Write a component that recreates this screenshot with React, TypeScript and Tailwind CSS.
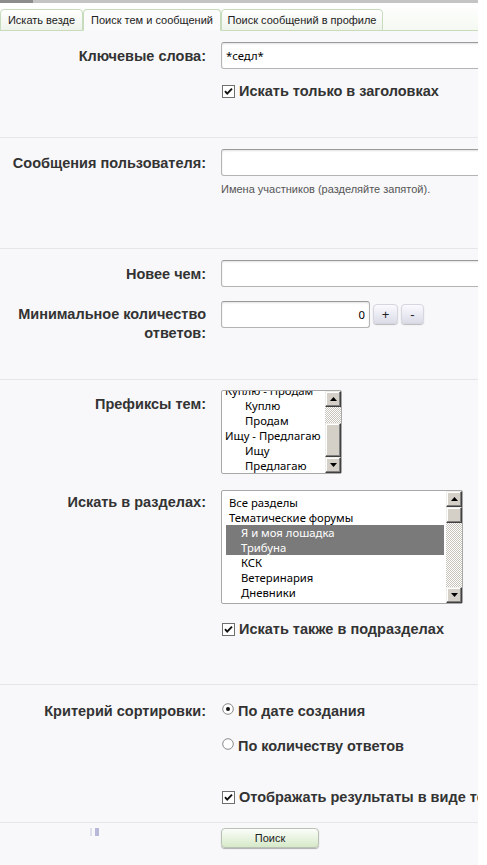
import React from 'react';

const labelCls = "text-[14.5px] font-bold leading-[16px] text-[#333] font-['Liberation_Sans',Arial,sans-serif]";
const listFont = "font-['Noto_Sans','DejaVu_Sans',sans-serif] text-[11.3px] leading-[15px] text-black";

// Windows-classic 3D bevel used by scroll buttons and thumbs
const bevel =
  'border border-t-[#f0eee8] border-l-[#f0eee8] border-r-[#404040] border-b-[#404040] bg-[#d4d0c8] shadow-[inset_-1px_-1px_0_#808080,inset_1px_1px_0_#ffffff]';

const ArrowButton = ({ down }: { down?: boolean }) => (
  <div className={`flex h-[16px] w-[16px] shrink-0 items-center justify-center ${bevel}`}>
    <svg width="7" height="4" viewBox="0 0 7 4">
      <path d={down ? 'M0 0h7L3.5 4z' : 'M0 4h7L3.5 0z'} fill="#000" />
    </svg>
  </div>
);

const Scrollbar = ({ before, thumb, after }: { before: number; thumb: number; after: number }) => (
  <div className="flex w-[16px] shrink-0 flex-col">
    <ArrowButton />
    <div
      className="bg-[repeating-conic-gradient(#c8c4bc_0_25%,#ffffff_0_50%)] bg-[length:2px_2px]"
      style={{ height: before }}
    />
    <div className={bevel} style={{ height: thumb }} />
    <div
      className="bg-[repeating-conic-gradient(#c8c4bc_0_25%,#ffffff_0_50%)] bg-[length:2px_2px]"
      style={{ height: after }}
    />
    <ArrowButton down />
  </div>
);

const CheckBox = () => (
  <svg width="13" height="13" viewBox="0 0 13 13" className="shrink-0">
    <rect x="0.5" y="0.5" width="12" height="12" fill="#fff" stroke="#6f6f6f" />
    <path d="M3 6.2 L5.2 8.6 L10 3.6" fill="none" stroke="#111" strokeWidth="1.9" />
  </svg>
);

const Radio = ({ checked }: { checked?: boolean }) => (
  <svg width="12" height="12" viewBox="0 0 12 12" className="shrink-0 -mt-[4px]">
    <circle cx="6" cy="6" r="5.3" fill="#fff" stroke="#8a8a8a" />
    {checked && <circle cx="6" cy="6" r="2" fill="#111" />}
  </svg>
);

const Row = ({
  label,
  labelPad = '',
  className = '',
  children,
}: {
  label?: React.ReactNode;
  labelPad?: string;
  className?: string;
  children: React.ReactNode;
}) => (
  <div className={`flex ${className}`}>
    <div className={`w-[206px] shrink-0 text-right ${labelCls} ${labelPad}`}>{label}</div>
    <div className="ml-[15px] min-w-0 flex-1">{children}</div>
  </div>
);

const TextBox = ({ value = '', width = 'w-[290px]', align = 'text-left' }: { value?: string; width?: string; align?: string }) => (
  <input
    readOnly
    value={value}
    className={`block h-[27px] ${width} ${align} rounded-[3px] border border-[#b4b4b4] border-t-[#9a9a9a] bg-white px-[4px] text-[11.3px] text-black shadow-[inset_0_1px_2px_rgba(0,0,0,0.12)] outline-none font-['Noto_Sans','DejaVu_Sans',sans-serif]`}
  />
);

const Tick = ({ children }: { children: React.ReactNode }) => (
  <div className="flex h-[16px] items-center gap-[4px] whitespace-nowrap pl-[1px]">
    <CheckBox />
    <span className={labelCls}>{children}</span>
  </div>
);

const Section = ({ className, children }: { className: string; children: React.ReactNode }) => (
  <div className={`border-b border-[#e6e6e8] ${className}`}>{children}</div>
);

const prefixes = [
  { text: 'Куплю - Продам', child: false },
  { text: 'Куплю', child: true },
  { text: 'Продам', child: true },
  { text: 'Ищу - Предлагаю', child: false },
  { text: 'Ищу', child: true },
  { text: 'Предлагаю', child: true },
];

const forums = [
  { text: 'Все разделы', child: false, sel: false },
  { text: 'Тематические форумы', child: false, sel: false },
  { text: 'Я и моя лошадка', child: true, sel: true },
  { text: 'Трибуна', child: true, sel: true },
  { text: 'КСК', child: true, sel: false },
  { text: 'Ветеринария', child: true, sel: false },
  { text: 'Дневники', child: true, sel: false },
];

const tabs = [
  { title: 'Искать везде', w: 'w-[83px]', active: false },
  { title: 'Поиск тем и сообщений', w: 'w-[138px]', active: true },
  { title: 'Поиск сообщений в профиле', w: 'w-[162px]', active: false },
];

export default function App() {
  return (
    <div className="flex min-h-[865px] bg-white">
      <div className="w-[478px] shrink-0 overflow-hidden">
        {/* top strip */}
        <div className="flex h-[3px]">
          <div className="w-[33px] bg-[#8c8c8c]" />
          <div className="flex-1 bg-[#c4c4c4]" />
        </div>

        {/* tab bar */}
        <div className="flex h-[28px] items-end border-b border-[#c6dcbd] bg-gradient-to-b from-white to-[#f5f9f2] pt-[6px]">
          {tabs.map(t => (
            <div
              key={t.title}
              className={`${t.w} -mb-px flex h-[22px] items-center justify-center rounded-t-[4px] border border-[#c6dcbd] text-[11px] text-[#222] font-['Liberation_Sans',Arial,sans-serif] ${
                t.active ? 'border-b-[#f8f8fa] bg-[#fbfbfc]' : 'bg-gradient-to-b from-white to-[#eef3eb]'
              }`}
            >
              {t.title}
            </div>
          ))}
        </div>

        <div className="min-h-[834px] bg-[#f8f8fa]">
          {/* keywords */}
          <Section className="pt-[11px] pb-[38px]">
            <Row label="Ключевые слова:" labelPad="pt-[6px]">
              <TextBox value="*седл*" />
            </Row>
            <Row className="mt-[14px]">
              <Tick>Искать только в заголовках</Tick>
            </Row>
          </Section>

          {/* user posts */}
          <Section className="pt-[11px] pb-[52px]">
            <Row label="Сообщения пользователя:" labelPad="pt-[6px] whitespace-nowrap">
              <TextBox />
              <div className="mt-[6px] text-[11px] leading-[14px] text-[#555] font-['Liberation_Sans',Arial,sans-serif]">
                Имена участников (разделяйте запятой).
              </div>
            </Row>
          </Section>

          {/* date and replies */}
          <Section className="pt-[11px] pb-[36px]">
            <Row label="Новее чем:" labelPad="pt-[6px]">
              <TextBox />
            </Row>
            <Row
              className="mt-[14px]"
              label={
                <span className="block leading-[19px]">
                  Минимальное количество
                  <br />
                  ответов:
                </span>
              }
              labelPad="pt-[4px]"
            >
              <div className="flex items-start">
                <TextBox value="0" width="w-[149px]" align="text-right" />
                <div className="mt-[3px] ml-[3px] flex gap-[3px]">
                  {['+', '-'].map((s, i) => (
                    <div
                      key={s}
                      className={`flex h-[20px] ${i === 0 ? 'w-[25px]' : 'w-[23px]'} items-center justify-center rounded-[4px] border border-[#d6d6e0] bg-gradient-to-b from-[#fafaff] to-[#dcdce8] text-[13px] leading-none text-[#222] shadow-[0_1px_1px_rgba(0,0,0,0.25)] font-['Liberation_Sans',Arial,sans-serif]`}
                    >
                      {s}
                    </div>
                  ))}
                </div>
              </div>
            </Row>
          </Section>

          {/* prefixes and forums */}
          <Section className="pt-[10px] pb-[47px]">
            <Row label="Префиксы тем:" labelPad="pt-[6px]">
              <div className="flex h-[84px] w-[121px] rounded-[2px] border border-[#a8a8a8] bg-white">
                <div className={`flex-1 overflow-hidden ${listFont}`}>
                  <div className="-mt-[8px]">
                    {prefixes.map(p => (
                      <div key={p.text} className={`h-[15px] whitespace-nowrap ${p.child ? 'pl-[23px]' : 'pl-[3px]'}`}>
                        {p.text}
                      </div>
                    ))}
                  </div>
                </div>
                <Scrollbar before={16} thumb={34} after={0} />
              </div>
            </Row>

            <Row className="mt-[16px]" label="Искать в разделах:" labelPad="pt-[4px]">
              <div className="flex h-[114px] w-[242px] rounded-[2px] border border-[#a8a8a8] bg-white">
                <div className={`flex-1 overflow-hidden pt-[4px] pl-[4px] pr-[2px] ${listFont}`}>
                  {forums.map(f => (
                    <div
                      key={f.text}
                      className={`h-[15px] whitespace-nowrap ${f.child ? 'pl-[15px]' : 'pl-[3px]'} ${
                        f.sel ? 'bg-[#7a7a7a] text-white' : ''
                      }`}
                    >
                      {f.text}
                    </div>
                  ))}
                </div>
                <Scrollbar before={0} thumb={16} after={64} />
              </div>
            </Row>

            <Row className="mt-[17px]">
              <Tick>Искать также в подразделах</Tick>
            </Row>
          </Section>

          {/* ordering */}
          <Section className="pt-[18px] pb-[17px]">
            <Row label="Критерий сортировки:">
              <div className="flex h-[16px] items-center gap-[4px] whitespace-nowrap pl-[1px]">
                <Radio checked />
                <span className={labelCls}>По дате создания</span>
              </div>
            </Row>
            <Row className="mt-[19px]">
              <div className="flex h-[16px] items-center gap-[4px] whitespace-nowrap pl-[1px]">
                <Radio />
                <span className={labelCls}>По количеству ответов</span>
              </div>
            </Row>
            <Row className="mt-[35px]">
              <Tick>Отображать результаты в виде тем</Tick>
            </Row>
          </Section>

          {/* submit */}
          <div className="pt-[5px]">
            <Row label={<span className="ml-[90px] flex gap-[3px]"><span className="h-[8px] w-[2px] bg-[#e0e0ea]" /><span className="h-[8px] w-[4px] bg-[#b8b8d8]" /></span>}>
              <div className="flex h-[20px] w-[98px] items-center justify-center rounded-[4px] border border-[#b9c2b4] bg-gradient-to-b from-[#fbfdf9] to-[#d6e9c9] text-[11px] text-[#222] shadow-[0_1px_1px_rgba(0,0,0,0.3)] font-['Liberation_Sans',Arial,sans-serif]">
                Поиск
              </div>
            </Row>
          </div>
        </div>
      </div>
    </div>
  );
}
